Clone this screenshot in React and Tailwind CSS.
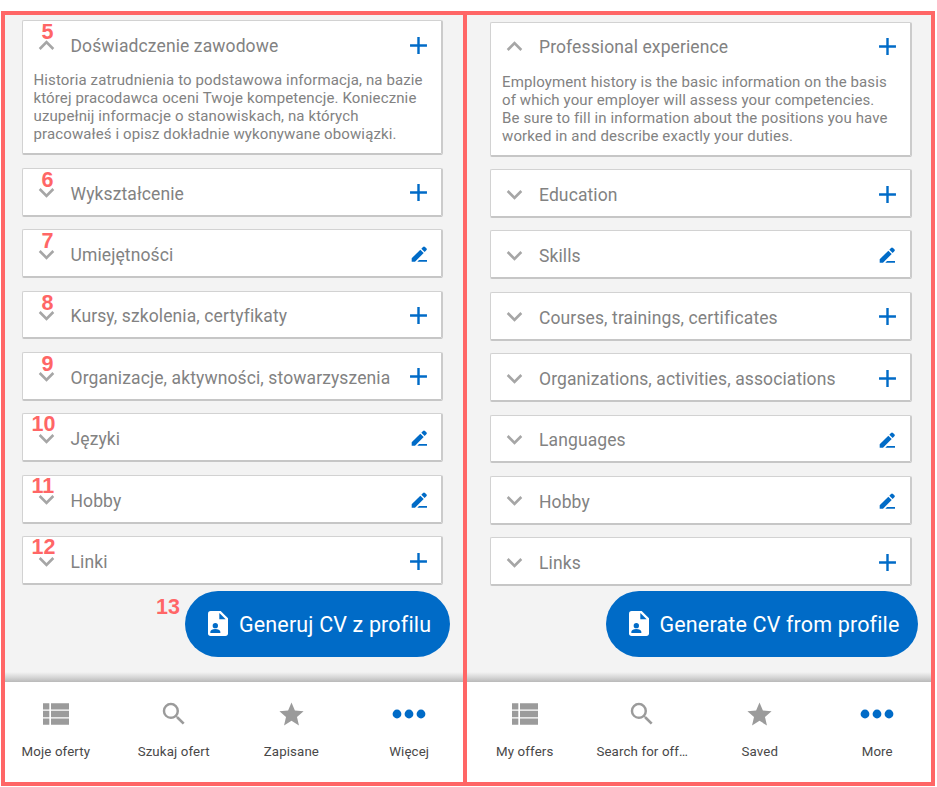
import React from "react";
import { MdAdd, MdExpandLess, MdExpandMore, MdSearch, MdStar } from "react-icons/md";

function PenIcon() {
  return (
    <svg viewBox="0 0 48 48" className="h-4 w-4" fill="#006bc7">
      <path d="M2 47V37L28 11L38 21L12 47Z" />
      <path d="M31 8L36 3Q39 0 42 3L46 7Q49 10 46 13L41 18Z" />
      <path d="M24 42H48V47H19Z" />
    </svg>
  );
}

function CvIcon() {
  return (
    <svg viewBox="0 0 60 75" className="h-[25px] w-5 shrink-0">
      <path
        fill="#fff"
        d="M8 0H38L60 22V67Q60 75 52 75H8Q0 75 0 67V8Q0 0 8 0Z"
      />
      <path fill="#006bc7" d="M34 6V25H53Z" />
      <circle cx="22" cy="44" r="8" fill="#006bc7" />
      <path fill="#006bc7" d="M7 66V62Q9 54 22 54T37 62V66Z" />
    </svg>
  );
}

function ListIcon() {
  return (
    <svg viewBox="0 0 78 65" className="h-[22px] w-[26px]" fill="#9b9b9b">
      <path d="M0 0H19V19H0ZM24 0H78V19H24ZM0 23H19V42H0ZM24 23H78V42H24ZM0 46H19V65H0ZM24 46H78V65H24Z" />
    </svg>
  );
}

function DotsIcon() {
  return (
    <svg viewBox="0 0 34 10" className="h-[10px] w-[34px]" fill="#006bc7">
      <circle cx="5" cy="5" r="4.4" />
      <circle cx="17" cy="5" r="4.4" />
      <circle cx="29" cy="5" r="4.4" />
    </svg>
  );
}

function Card({ title, action, text, mark }) {
  const Chevron = text ? MdExpandLess : MdExpandMore;
  return (
    <section
      className={
        "relative rounded-[2px] border border-r-2 border-b-2 border-[#d2d2d2] border-r-[#cbcbcb] border-b-[#c6c6c6] bg-white " +
        (text ? "h-[135px]" : "h-[48.9px]")
      }
    >
      <div className="flex h-[48px] items-center pr-[8px] pl-[8px]">
        <Chevron className="h-[31px] w-[31px] shrink-0 text-[#a6a6a6]" />
        <h2 className="ml-[9px] flex-1 pt-[2px] text-[17.5px] tracking-[0.11px] whitespace-nowrap text-[#828282]">
          {title}
        </h2>
        <span className="flex h-[29px] w-[29px] items-center justify-center text-[#006bc7]">
          {action === "add" ? <MdAdd className="h-[29px] w-[29px]" /> : <PenIcon />}
        </span>
      </div>
      {text && (
        <p className="mt-[2px] pl-[11px] text-[15px] leading-[18px] tracking-[0.12px] whitespace-nowrap text-[#828282]">
          {text.map((line) => (
            <span key={line} className="block">
              {line}
            </span>
          ))}
        </p>
      )}
      {mark && (
        <span
          className={
            "absolute font-['Liberation_Sans',Arial,sans-serif] text-[21.5px] leading-[24px] font-bold text-[#ff6666] " +
            (mark.length > 1 ? "top-[-2px] left-[9px]" : "top-[-1px] left-[19px]")
          }
        >
          {mark}
        </span>
      )}
    </section>
  );
}

function NavItem({ icon, label }) {
  return (
    <div className="flex flex-1 flex-col items-center">
      <div className="flex h-[64px] items-center justify-center">{icon}</div>
      <span className="-mt-px text-[13.3px] leading-[14px] tracking-[0.12px] whitespace-nowrap text-[#484848]">
        {label}
      </span>
    </div>
  );
}

function Screen({ cards, button, buttonMark, nav, className, listClass, buttonClass, navClass }) {
  return (
    <div className={"flex h-full flex-col bg-[#f3f3f3] " + className}>
      <div className={"flex flex-col gap-[12.5px] " + listClass}>
        {cards.map((card) => (
          <Card key={card.title} {...card} />
        ))}
      </div>
      <div className={"flex items-start justify-end " + buttonClass}>
        {buttonMark && (
          <span className="mt-[4px] mr-[5px] font-['Liberation_Sans',Arial,sans-serif] text-[21.5px] leading-[24px] font-bold text-[#ff6666]">
            {buttonMark}
          </span>
        )}
        {button}
      </div>
      <div className="mt-auto h-[10px] shrink-0 bg-linear-to-b from-[#f3f3f3] via-[#d8d8d8] to-[#b9b9b9]" />
      <nav className="h-[100px] shrink-0 overflow-visible bg-white">
        <div className={"flex " + navClass}>
          <NavItem icon={<ListIcon />} label={nav[0]} />
          <NavItem icon={<MdSearch className="h-[30px] w-[30px] text-[#9b9b9b]" />} label={nav[1]} />
          <NavItem icon={<MdStar className="h-[29px] w-[29px] text-[#9b9b9b]" />} label={nav[2]} />
          <NavItem icon={<DotsIcon />} label={nav[3]} />
        </div>
      </nav>
    </div>
  );
}

const polish = [
  {
    title: "Doświadczenie zawodowe",
    action: "add",
    mark: "5",
    text: [
      "Historia zatrudnienia to podstawowa informacja, na bazie",
      "której pracodawca oceni Twoje kompetencje. Koniecznie",
      "uzupełnij informacje o stanowiskach, na których",
      "pracowałeś i opisz dokładnie wykonywane obowiązki.",
    ],
  },
  { title: "Wykształcenie", action: "add", mark: "6" },
  { title: "Umiejętności", action: "edit", mark: "7" },
  { title: "Kursy, szkolenia, certyfikaty", action: "add", mark: "8" },
  { title: "Organizacje, aktywności, stowarzyszenia", action: "add", mark: "9" },
  { title: "Języki", action: "edit", mark: "10" },
  { title: "Hobby", action: "edit", mark: "11" },
  { title: "Linki", action: "add", mark: "12" },
];

const english = [
  {
    title: "Professional experience",
    action: "add",
    text: [
      "Employment history is the basic information on the basis",
      "of which your employer will assess your competencies.",
      "Be sure to fill in information about the positions you have",
      "worked in and describe exactly your duties.",
    ],
  },
  { title: "Education", action: "add" },
  { title: "Skills", action: "edit" },
  { title: "Courses, trainings, certificates", action: "add" },
  { title: "Organizations, activities, associations", action: "add" },
  { title: "Languages", action: "edit" },
  { title: "Hobby", action: "edit" },
  { title: "Links", action: "add" },
];

export default function App() {
  return (
    <main className="h-[787px] w-[937px] overflow-hidden bg-white pt-[11px] pl-px font-[Roboto,sans-serif]">
      <div className="flex h-[775px] w-[934px] border-4 border-[#ff6666]">
        <Screen
          cards={polish}
          nav={["Moje oferty", "Szukaj ofert", "Zapisane", "Więcej"]}
          className="w-[458px]"
          listClass="pt-[5.3px] pl-[16.5px] pr-[20px]"
          buttonClass="mt-[5.7px] pr-[13.5px]"
          navClass="-ml-[8px] w-[471px]"
          buttonMark="13"
          button={
            <button className="flex h-[66px] w-[264.5px] items-center rounded-full bg-[#006bc7] pl-[23px] text-[21.5px] tracking-[0.15px] whitespace-nowrap text-white">
              <CvIcon />
              <span className="ml-[11px] pt-[2px]">Generuj CV z profilu</span>
            </button>
          }
        />
        <div className="w-1 shrink-0 bg-[#ff6666]" />
        <Screen
          cards={english}
          nav={["My offers", "Search for off…", "Saved", "More"]}
          className="w-[464px]"
          listClass="pt-[6.5px] pl-[23px] pr-[19.5px]"
          buttonClass="mt-[4.5px] pr-[13px]"
          navClass="-ml-[1px] w-[470px]"
          button={
            <button className="flex h-[66px] w-[312.5px] items-center rounded-full bg-[#006bc7] pl-[23px] text-[21.5px] tracking-[0.15px] whitespace-nowrap text-white">
              <CvIcon />
              <span className="ml-[11px] pt-[2px]">Generate CV from profile</span>
            </button>
          }
        />
      </div>
    </main>
  );
}
